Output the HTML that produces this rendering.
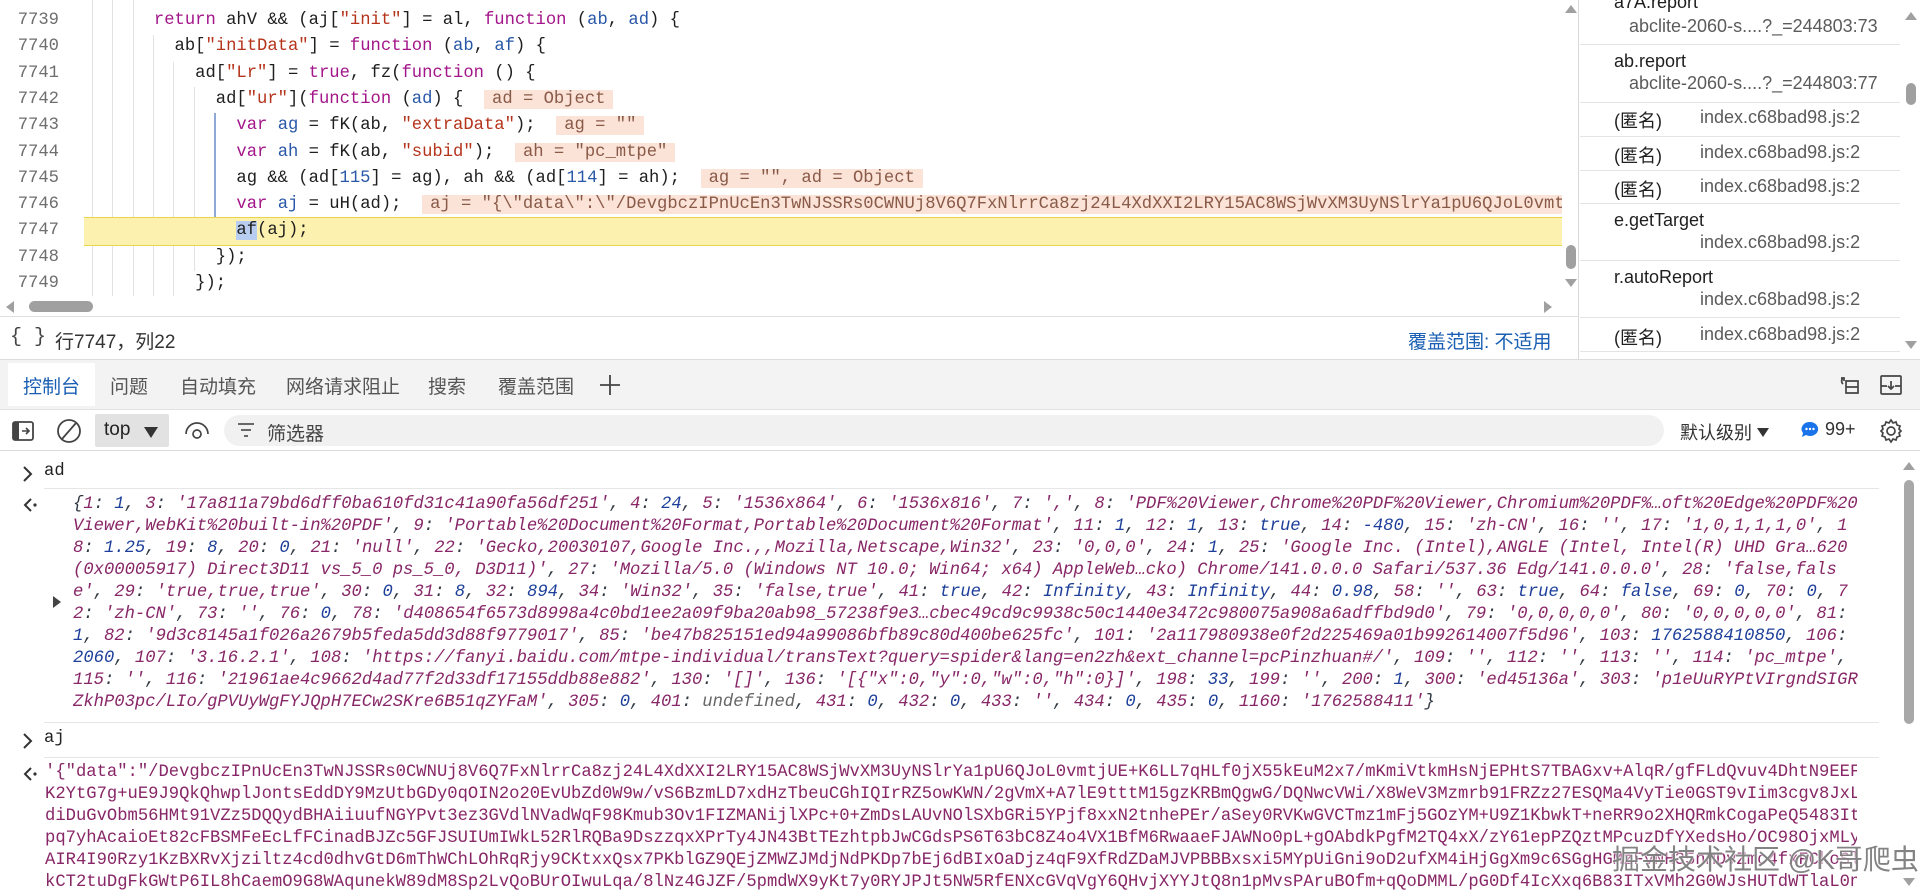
<!DOCTYPE html>
<html><head><meta charset="utf-8">
<style>
*{margin:0;padding:0;box-sizing:border-box}
body{width:1920px;height:896px;overflow:hidden;background:#fff;position:relative;font-family:"Liberation Sans","Noto Sans CJK SC",sans-serif;color:#1f1f1f}
.a{position:absolute}
.mono{font-family:"Liberation Mono","Noto Sans CJK SC",monospace;font-size:17.2px;white-space:pre}
.ln{position:absolute;left:0;width:59px;text-align:right;color:#6e6e6e;font-family:"Liberation Mono",monospace;font-size:17.2px;line-height:26.3px}
.cl{position:absolute;left:92px;line-height:26.3px;height:26.3px}
.k{color:#a3168a}.s{color:#b5341c}.d{color:#2a58a8}.n{color:#2a58a8}
.iv{background:#fbe3d8;color:#8a5a48;padding:0 8px}
.g{position:absolute;width:1px;background:#e2e2e2}
.o{position:absolute;left:73px;line-height:22px;font-style:italic;color:#303942;width:1790px;overflow:hidden}
.p{color:#882767}.b{color:#1d3f9a}
.aj{position:absolute;left:45px;line-height:22px;color:#882767;width:1812px;overflow:hidden}
.rp{font-size:18px;position:absolute}
.loc{color:#5b5b5b}
.sep{position:absolute;left:1580px;width:320px;height:1px;background:#e4e4e4}
</style></head><body>

<!-- code editor -->
<div class="a" style="left:0;top:0;width:1562px;height:296px;overflow:hidden">
  <div class="g" style="left:92px;top:0;height:296px"></div>
  <div class="g" style="left:112px;top:0;height:296px"></div>
  <div class="g" style="left:133px;top:0;height:296px"></div>
  <div class="g" style="left:153px;top:35px;height:261px"></div>
  <div class="g" style="left:173px;top:62px;height:234px"></div>
  <div class="g" style="left:194px;top:87px;height:184px"></div>
  <div class="g" style="left:214px;top:113px;height:104px;background:#8fa9d6;width:2px"></div>
  <div class="a" style="left:84px;top:217px;width:1478px;height:29px;background:#fdf1b0;border-top:1px solid #e8d44d;border-bottom:1px solid #e8d44d"></div>
  <div class="ln" style="top:8px">7739</div>
  <div class="ln" style="top:34.3px">7740</div>
  <div class="ln" style="top:60.6px">7741</div>
  <div class="ln" style="top:86.9px">7742</div>
  <div class="ln" style="top:113.2px">7743</div>
  <div class="ln" style="top:139.5px">7744</div>
  <div class="ln" style="top:165.8px">7745</div>
  <div class="ln" style="top:192.1px">7746</div>
  <div class="ln" style="top:218.4px">7747</div>
  <div class="ln" style="top:244.7px">7748</div>
  <div class="ln" style="top:271px">7749</div>
  <div class="cl mono" style="top:8px">      <span class="k">return</span> ahV &amp;&amp; (aj[<span class="s">"init"</span>] = al, <span class="k">function</span> (<span class="d">ab</span>, <span class="d">ad</span>) {</div>
  <div class="cl mono" style="top:34.3px">        ab[<span class="s">"initData"</span>] = <span class="k">function</span> (<span class="d">ab</span>, <span class="d">af</span>) {</div>
  <div class="cl mono" style="top:60.6px">          ad[<span class="s">"Lr"</span>] = <span class="k">true</span>, fz(<span class="k">function</span> () {</div>
  <div class="cl mono" style="top:86.9px">            ad[<span class="s">"ur"</span>](<span class="k">function</span> (<span class="d">ad</span>) {  <span class="iv">ad = Object</span></div>
  <div class="cl mono" style="top:113.2px">              <span class="k">var</span> <span class="d">ag</span> = fK(ab, <span class="s">"extraData"</span>);  <span class="iv">ag = ""</span></div>
  <div class="cl mono" style="top:139.5px">              <span class="k">var</span> <span class="d">ah</span> = fK(ab, <span class="s">"subid"</span>);  <span class="iv">ah = "pc_mtpe"</span></div>
  <div class="cl mono" style="top:165.8px">              ag &amp;&amp; (ad[<span class="n">115</span>] = ag), ah &amp;&amp; (ad[<span class="n">114</span>] = ah);  <span class="iv">ag = "", ad = Object</span></div>
  <div class="cl mono" style="top:192.1px">              <span class="k">var</span> <span class="d">aj</span> = uH(ad);  <span class="iv">aj = "{\"data\":\"/DevgbczIPnUcEn3TwNJSSRs0CWNUj8V6Q7FxNlrrCa8zj24L4XdXXI2LRY15AC8WSjWvXM3UyNSlrYa1pU6QJoL0vmtjUE+K6LL7qHLf0jX55</span></div>
  <div class="cl mono" style="top:218.4px">              <span style="background:#b8cdf0">af</span>(aj);</div>
  <div class="cl mono" style="top:244.7px">            });</div>
  <div class="cl mono" style="top:271px">          });</div>
</div>
<!-- code scrollbars -->
<div class="a" style="left:1565px;top:5px;width:0;height:0;border-left:6px solid transparent;border-right:6px solid transparent;border-bottom:8px solid #a0a0a0"></div>
<div class="a" style="left:1566px;top:245px;width:10px;height:24px;border-radius:5px;background:#a0a0a0"></div>
<div class="a" style="left:1565px;top:279px;width:0;height:0;border-left:6px solid transparent;border-right:6px solid transparent;border-top:8px solid #a0a0a0"></div>
<div class="a" style="left:6px;top:301px;width:0;height:0;border-top:6px solid transparent;border-bottom:6px solid transparent;border-right:8px solid #a0a0a0"></div>
<div class="a" style="left:29px;top:301px;width:64px;height:11px;border-radius:6px;background:#a0a0a0"></div>
<div class="a" style="left:1544px;top:301px;width:0;height:0;border-top:6px solid transparent;border-bottom:6px solid transparent;border-left:8px solid #a0a0a0"></div>
<div class="a" style="left:0;top:316px;width:1578px;height:1px;background:#e0e0e0"></div>
<!-- status -->
<div class="a mono" style="left:10px;top:326px;font-size:20px;color:#444">{ }</div>
<div class="a" style="left:55px;top:327px;font-size:19px;color:#333">行7747，列22</div>
<div class="a" style="left:1408px;top:327px;font-size:19px;color:#1a5fb4">覆盖范围: 不适用</div>

<!-- right call stack panel -->
<div class="a" style="left:1578px;top:0;width:1px;height:359px;background:#d8d8d8"></div>
<div class="rp" style="left:1614px;top:-8px">a7A.report</div>
<div class="rp loc" style="left:1629px;top:16px">abclite-2060-s....?_=244803:73</div>
<div class="sep" style="top:44px"></div>
<div class="rp" style="left:1614px;top:51px">ab.report</div>
<div class="rp loc" style="left:1629px;top:73px">abclite-2060-s....?_=244803:77</div>
<div class="sep" style="top:102px"></div>
<div class="rp" style="left:1614px;top:107px">(匿名)</div><div class="rp loc" style="left:1700px;top:107px">index.c68bad98.js:2</div>
<div class="sep" style="top:136px"></div>
<div class="rp" style="left:1614px;top:142px">(匿名)</div><div class="rp loc" style="left:1700px;top:142px">index.c68bad98.js:2</div>
<div class="sep" style="top:170px"></div>
<div class="rp" style="left:1614px;top:176px">(匿名)</div><div class="rp loc" style="left:1700px;top:176px">index.c68bad98.js:2</div>
<div class="sep" style="top:203px"></div>
<div class="rp" style="left:1614px;top:210px">e.getTarget</div>
<div class="rp loc" style="left:1700px;top:232px">index.c68bad98.js:2</div>
<div class="sep" style="top:260px"></div>
<div class="rp" style="left:1614px;top:267px">r.autoReport</div>
<div class="rp loc" style="left:1700px;top:289px">index.c68bad98.js:2</div>
<div class="sep" style="top:317px"></div>
<div class="rp" style="left:1614px;top:324px">(匿名)</div><div class="rp loc" style="left:1700px;top:324px">index.c68bad98.js:2</div>
<div class="sep" style="top:351px"></div>
<div class="a" style="left:1905px;top:12px;width:0;height:0;border-left:6px solid transparent;border-right:6px solid transparent;border-bottom:8px solid #a0a0a0"></div>
<div class="a" style="left:1906px;top:83px;width:10px;height:22px;border-radius:5px;background:#a0a0a0"></div>
<div class="a" style="left:1905px;top:341px;width:0;height:0;border-left:6px solid transparent;border-right:6px solid transparent;border-top:8px solid #a0a0a0"></div>

<!-- drawer tab bar -->
<div class="a" style="left:0;top:359px;width:1920px;height:1px;background:#dcdcdc"></div>
<div class="a" style="left:0;top:360px;width:1920px;height:50px;background:#f3f3f3;border-bottom:1px solid #e2e2e2"></div>
<div class="a" style="left:8px;top:363px;width:87px;height:43px;background:#fff"></div>
<div class="a" style="left:23px;top:372px;font-size:19px;color:#1a5fb4">控制台</div>
<div class="a" style="left:110px;top:372px;font-size:19px;color:#555">问题</div>
<div class="a" style="left:180px;top:372px;font-size:19px;color:#555">自动填充</div>
<div class="a" style="left:286px;top:372px;font-size:19px;color:#555">网络请求阻止</div>
<div class="a" style="left:428px;top:372px;font-size:19px;color:#555">搜索</div>
<div class="a" style="left:498px;top:372px;font-size:19px;color:#555">覆盖范围</div>
<svg class="a" style="left:599px;top:374px" width="22" height="22"><path d="M11 1V21M1 11H21" stroke="#444" stroke-width="1.8"/></svg>
<svg class="a" style="left:1838px;top:373px" width="24" height="24" fill="none" stroke="#444" stroke-width="1.7"><path d="M8 8h12v12H8zM8 14h12"/><path d="M5 5a4 4 0 0 0 0 6" /><path d="M3 5h3v3"/></svg>
<svg class="a" style="left:1879px;top:373px" width="24" height="24" fill="none" stroke="#444" stroke-width="1.7"><rect x="2" y="3" width="20" height="18" rx="1"/><path d="M2 13h6M16 13h6M12 8v8M9 13l3 3 3-3"/></svg>

<!-- console toolbar -->
<svg class="a" style="left:12px;top:421px" width="22" height="20"><rect x="1" y="1" width="20" height="18" rx="2" fill="none" stroke="#444" stroke-width="1.8"/><rect x="1" y="1" width="6" height="18" fill="#444"/><path d="M10 10h7M14 7l3 3-3 3" stroke="#444" stroke-width="1.6" fill="none"/></svg>
<svg class="a" style="left:56px;top:418px" width="26" height="26"><circle cx="13" cy="13" r="11" fill="none" stroke="#444" stroke-width="1.8"/><path d="M20 5L6 21" stroke="#444" stroke-width="1.8"/></svg>
<div class="a" style="left:95px;top:414px;width:74px;height:33px;background:#e2e2e2;border-radius:2px"></div>
<div class="a" style="left:104px;top:419px;font-size:19px;color:#222">top</div>
<svg class="a" style="left:143px;top:425px" width="16" height="14"><path d="M1 2h14L8 13z" fill="#333"/></svg>
<svg class="a" style="left:184px;top:419px" width="26" height="22" fill="none" stroke="#444" stroke-width="1.7"><path d="M2 15a11 11 0 0 1 22 0"/><circle cx="13" cy="15" r="4"/></svg>
<div class="a" style="left:224px;top:415px;width:1440px;height:31px;background:#f1f1f1;border-radius:16px"></div>
<svg class="a" style="left:237px;top:422px" width="18" height="16"><path d="M1 2h16M4 8h10M7 14h4" stroke="#555" stroke-width="1.8"/></svg>
<div class="a" style="left:267px;top:419px;font-size:19px;color:#444">筛选器</div>
<div class="a" style="left:1680px;top:419px;font-size:18px;color:#333">默认级别</div>
<svg class="a" style="left:1756px;top:426px" width="14" height="12"><path d="M1 2h12L7 11z" fill="#333"/></svg>
<svg class="a" style="left:1800px;top:420px" width="20" height="20"><path d="M10 2a8 7 0 1 1-4 13l-4 2 1-4a8 7 0 0 1 7-11z" fill="#1a73e8"/><circle cx="6.5" cy="9" r="1.2" fill="#fff"/><circle cx="10" cy="9" r="1.2" fill="#fff"/><circle cx="13.5" cy="9" r="1.2" fill="#fff"/></svg>
<div class="a" style="left:1825px;top:419px;font-size:18px;color:#333">99+</div>
<svg class="a" style="left:1878px;top:418px" width="26" height="26" fill="none" stroke="#444" stroke-width="1.7"><circle cx="13" cy="13" r="4"/><path d="M13 2l2 3 3-1 1 3 3 1-1 3 2 2-2 2 1 3-3 1-1 3-3-1-2 3-2-3-3 1-1-3-3-1 1-3-2-2 2-2-1-3 3-1 1-3 3 1z"/></svg>
<div class="a" style="left:0;top:450px;width:1920px;height:1px;background:#dcdcdc"></div>

<!-- console content -->
<svg class="a" style="left:22px;top:465px" width="12" height="18"><path d="M2 2l7 7-7 7" stroke="#333" stroke-width="2" fill="none"/></svg>
<div class="a mono" style="left:44px;top:462px;color:#222">ad</div>
<div class="a" style="left:44px;top:488px;width:1835px;height:1px;background:#e6e6e6"></div>
<svg class="a" style="left:22px;top:497px" width="16" height="16"><path d="M9 2L3 8l6 6" stroke="#333" stroke-width="2" fill="none"/><circle cx="13" cy="8" r="1.6" fill="#333"/></svg>
<svg class="a" style="left:52px;top:595px" width="10" height="14"><path d="M1 1l8 6-8 6z" fill="#444"/></svg>
<div class="o mono" style="top:494px">{<span class="p">1</span>: <span class="b">1</span>, <span class="p">3</span>: <span class="p">'17a811a79bd6dff0ba610fd31c41a90fa56df251'</span>, <span class="p">4</span>: <span class="b">24</span>, <span class="p">5</span>: <span class="p">'1536x864'</span>, <span class="p">6</span>: <span class="p">'1536x816'</span>, <span class="p">7</span>: <span class="p">','</span>, <span class="p">8</span>: <span class="p">'PDF%20Viewer,Chrome%20PDF%20Viewer,Chromium%20PDF%…oft%20Edge%20PDF%20</span></div>
<div class="o mono" style="top:516px"><span class="p">Viewer,WebKit%20built-in%20PDF'</span>, <span class="p">9</span>: <span class="p">'Portable%20Document%20Format,Portable%20Document%20Format'</span>, <span class="p">11</span>: <span class="b">1</span>, <span class="p">12</span>: <span class="b">1</span>, <span class="p">13</span>: <span class="b">true</span>, <span class="p">14</span>: <span class="b">-480</span>, <span class="p">15</span>: <span class="p">'zh-CN'</span>, <span class="p">16</span>: <span class="p">''</span>, <span class="p">17</span>: <span class="p">'1,0,1,1,1,0'</span>, <span class="p">1</span></div>
<div class="o mono" style="top:538px"><span class="p">8</span>: <span class="b">1.25</span>, <span class="p">19</span>: <span class="b">8</span>, <span class="p">20</span>: <span class="b">0</span>, <span class="p">21</span>: <span class="p">'null'</span>, <span class="p">22</span>: <span class="p">'Gecko,20030107,Google Inc.,,Mozilla,Netscape,Win32'</span>, <span class="p">23</span>: <span class="p">'0,0,0'</span>, <span class="p">24</span>: <span class="b">1</span>, <span class="p">25</span>: <span class="p">'Google Inc. (Intel),ANGLE (Intel, Intel(R) UHD Gra…620</span></div>
<div class="o mono" style="top:560px"><span class="p">(0x00005917) Direct3D11 vs_5_0 ps_5_0, D3D11)'</span>, <span class="p">27</span>: <span class="p">'Mozilla/5.0 (Windows NT 10.0; Win64; x64) AppleWeb…cko) Chrome/141.0.0.0 Safari/537.36 Edg/141.0.0.0'</span>, <span class="p">28</span>: <span class="p">'false,fals</span></div>
<div class="o mono" style="top:582px"><span class="p">e'</span>, <span class="p">29</span>: <span class="p">'true,true,true'</span>, <span class="p">30</span>: <span class="b">0</span>, <span class="p">31</span>: <span class="b">8</span>, <span class="p">32</span>: <span class="b">894</span>, <span class="p">34</span>: <span class="p">'Win32'</span>, <span class="p">35</span>: <span class="p">'false,true'</span>, <span class="p">41</span>: <span class="b">true</span>, <span class="p">42</span>: <span class="b">Infinity</span>, <span class="p">43</span>: <span class="b">Infinity</span>, <span class="p">44</span>: <span class="b">0.98</span>, <span class="p">58</span>: <span class="p">''</span>, <span class="p">63</span>: <span class="b">true</span>, <span class="p">64</span>: <span class="b">false</span>, <span class="p">69</span>: <span class="b">0</span>, <span class="p">70</span>: <span class="b">0</span>, <span class="p">7</span></div>
<div class="o mono" style="top:604px"><span class="p">2</span>: <span class="p">'zh-CN'</span>, <span class="p">73</span>: <span class="p">''</span>, <span class="p">76</span>: <span class="b">0</span>, <span class="p">78</span>: <span class="p">'d408654f6573d8998a4c0bd1ee2a09f9ba20ab98_57238f9e3…cbec49cd9c9938c50c1440e3472c980075a908a6adffbd9d0'</span>, <span class="p">79</span>: <span class="p">'0,0,0,0,0'</span>, <span class="p">80</span>: <span class="p">'0,0,0,0,0'</span>, <span class="p">81</span>:</div>
<div class="o mono" style="top:626px"><span class="b">1</span>, <span class="p">82</span>: <span class="p">'9d3c8145a1f026a2679b5feda5dd3d88f9779017'</span>, <span class="p">85</span>: <span class="p">'be47b825151ed94a99086bfb89c80d400be625fc'</span>, <span class="p">101</span>: <span class="p">'2a117980938e0f2d225469a01b992614007f5d96'</span>, <span class="p">103</span>: <span class="b">1762588410850</span>, <span class="p">106</span>:</div>
<div class="o mono" style="top:648px"><span class="b">2060</span>, <span class="p">107</span>: <span class="p">'3.16.2.1'</span>, <span class="p">108</span>: <span class="p">'https://fanyi.baidu.com/mtpe-individual/transText?query=spider&amp;lang=en2zh&amp;ext_channel=pcPinzhuan#/'</span>, <span class="p">109</span>: <span class="p">''</span>, <span class="p">112</span>: <span class="p">''</span>, <span class="p">113</span>: <span class="p">''</span>, <span class="p">114</span>: <span class="p">'pc_mtpe'</span>,</div>
<div class="o mono" style="top:670px"><span class="p">115</span>: <span class="p">''</span>, <span class="p">116</span>: <span class="p">'21961ae4c9662d4ad77f2d33df17155ddb88e882'</span>, <span class="p">130</span>: <span class="p">'[]'</span>, <span class="p">136</span>: <span class="p">'[{"x":0,"y":0,"w":0,"h":0}]'</span>, <span class="p">198</span>: <span class="b">33</span>, <span class="p">199</span>: <span class="p">''</span>, <span class="p">200</span>: <span class="b">1</span>, <span class="p">300</span>: <span class="p">'ed45136a'</span>, <span class="p">303</span>: <span class="p">'p1eUuRYPtVIrgndSIGR</span></div>
<div class="o mono" style="top:692px"><span class="p">ZkhP03pc/LIo/gPVUyWgFYJQpH7ECw2SKre6B51qZYFaM'</span>, <span class="p">305</span>: <span class="b">0</span>, <span class="p">401</span>: <span style="color:#666">undefined</span>, <span class="p">431</span>: <span class="b">0</span>, <span class="p">432</span>: <span class="b">0</span>, <span class="p">433</span>: <span class="p">''</span>, <span class="p">434</span>: <span class="b">0</span>, <span class="p">435</span>: <span class="b">0</span>, <span class="p">1160</span>: <span class="p">'1762588411'</span>}</div>
<div class="a" style="left:44px;top:722px;width:1835px;height:1px;background:#e6e6e6"></div>
<svg class="a" style="left:22px;top:732px" width="12" height="18"><path d="M2 2l7 7-7 7" stroke="#333" stroke-width="2" fill="none"/></svg>
<div class="a mono" style="left:44px;top:729px;color:#222">aj</div>
<div class="a" style="left:44px;top:757px;width:1835px;height:1px;background:#e6e6e6"></div>
<svg class="a" style="left:22px;top:766px" width="16" height="16"><path d="M9 2L3 8l6 6" stroke="#333" stroke-width="2" fill="none"/><circle cx="13" cy="8" r="1.6" fill="#333"/></svg>
<div class="aj mono" style="top:762px">'{"data":"/DevgbczIPnUcEn3TwNJSSRs0CWNUj8V6Q7FxNlrrCa8zj24L4XdXXI2LRY15AC8WSjWvXM3UyNSlrYa1pU6QJoL0vmtjUE+K6LL7qHLf0jX55kEuM2x7/mKmiVtkmHsNjEPHtS7TBAGxv+AlqR/gfFLdQvuv4DhtN9EEF</div>
<div class="aj mono" style="top:784px">K2YtG7g+uE9J9QkQhwplJontsEddDY9MzUtbGDy0qOIN2o20EvUbZd0W9w/vS6BzmLD7xdHzTbeuCGhIQIrRZ5owKWN/2gVmX+A7lE9tttM15gzKRBmQgwG/DQNwcVWi/X8WeV3Mzmrb91FRZz27ESQMa4VyTie0GST9vIim3cgv8JxL</div>
<div class="aj mono" style="top:806px">diDuGvObm56HMt91VZz5DQQydBHAiiuufNGYPvt3ez3GVdlNVadWqF98Kmub3Ov1FIZMANijlXPc+0+ZmDsLAUvNOlSXbGRi5YPjf8xxN2tnhePEr/aSey0RVKwGVCTmz1mFj5GOzYM+U9Z1KbwkT+neRR9o2XHQRmkCogaPeQ5483It</div>
<div class="aj mono" style="top:828px">pq7yhAcaioEt82cFBSMFeEcLfFCinadBJZc5GFJSUIUmIWkL52RlRQBa9DszzqxXPrTy4JN43BtTEzhtpbJwCGdsPS6T63bC8Z4o4VX1BfM6RwaaeFJAWNo0pL+gOAbdkPgfM2TQ4xX/zY61epPZQztMPcuzDfYXedsHo/OC98OjxMLy</div>
<div class="aj mono" style="top:850px">AIR4I90Rzy1KzBXRvXjziltz4cd0dhvGtD6mThWChLOhRqRjy9CKtxxQsx7PKblGZ9QEjZMWZJMdjNdPKDp7bEj6dBIxOaDjz4qF9XfRdZDaMJVPBBBxsxi5MYpUiGni9oD2ufXM4iHjGgXm9c6SGgHGMzFvNH35nMDvZmc4fxFCkoSl</div>
<div class="aj mono" style="top:872px">kCT2tuDgFkGWtP6IL8hCaemO9G8WAqunekW89dM8Sp2LvQoBUrOIwuLqa/8lNz4GJZF/5pmdWX9yKt7y0RYJPJt5NW5RfENXcGVqVgY6QHvjXYYJtQ8n1pMvsPAruBOfm+qQoDMML/pG0Df4IcXxq6B83ITxVMh2G0WJsHUTdWTlaL0n</div>

<!-- console scrollbar -->
<div class="a" style="left:1903px;top:462px;width:0;height:0;border-left:6px solid transparent;border-right:6px solid transparent;border-bottom:8px solid #a0a0a0"></div>
<div class="a" style="left:1904px;top:480px;width:10px;height:244px;border-radius:5px;background:#a8a8a8"></div>
<div class="a" style="left:1903px;top:878px;width:0;height:0;border-left:6px solid transparent;border-right:6px solid transparent;border-top:8px solid #a0a0a0"></div>

<!-- watermark -->
<div class="a" style="left:1612px;top:838px;font-size:28px;color:rgba(90,90,90,0.75);text-shadow:0 0 2px #fff,0 0 2px #fff">掘金技术社区 @K哥爬虫</div>
</body></html>
